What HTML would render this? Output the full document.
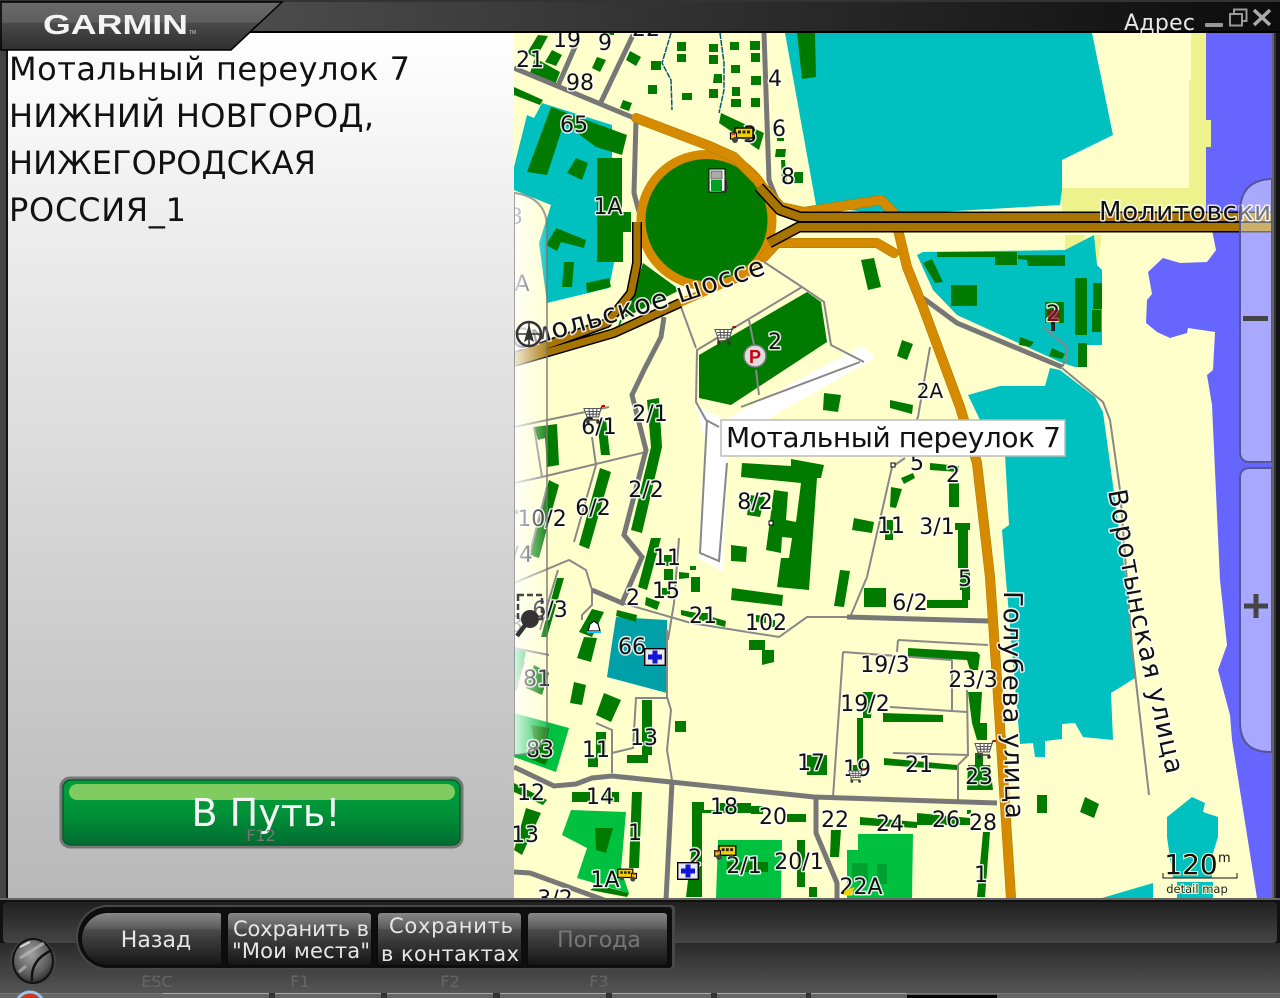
<!DOCTYPE html>
<html><head><meta charset="utf-8"><style>
html,body{margin:0;padding:0;background:#000;width:1280px;height:998px;overflow:hidden}
svg{display:block;font-family:"DejaVu Sans","Liberation Sans",sans-serif}
.l text,text.h{paint-order:stroke;stroke:#fff;stroke-width:3px;stroke-opacity:.85;stroke-linejoin:round;fill:#111;font-size:22px}
.l text{text-anchor:middle}
</style></head><body>
<svg width="1280" height="998" viewBox="0 0 1280 998" xmlns="http://www.w3.org/2000/svg">
<defs>
<linearGradient id="pg" x1="0" y1="0" x2="0" y2="1"><stop offset="0" stop-color="#fff"/><stop offset=".25" stop-color="#ebebeb"/><stop offset="1" stop-color="#b8b8b8"/></linearGradient>
<linearGradient id="tb" x1="0" y1="0" x2="1" y2="0"><stop offset="0" stop-color="#5c5c5c"/><stop offset=".5" stop-color="#333"/><stop offset="1" stop-color="#0c0c0c"/></linearGradient>
<linearGradient id="lg" x1="0" y1="0" x2="0" y2="1"><stop offset="0" stop-color="#6a6a6a"/><stop offset=".42" stop-color="#5e5e5e"/><stop offset=".44" stop-color="#4a4a4a"/><stop offset="1" stop-color="#2e2e2e"/></linearGradient>
<linearGradient id="gb" x1="0" y1="0" x2="0" y2="1"><stop offset="0" stop-color="#00a03c"/><stop offset=".5" stop-color="#009238"/><stop offset="1" stop-color="#006a30"/></linearGradient>
<linearGradient id="bt" x1="0" y1="0" x2="0" y2="1"><stop offset="0" stop-color="#202020"/><stop offset="1" stop-color="#454545"/></linearGradient>
<linearGradient id="bl" x1="0" y1="0" x2="0" y2="1"><stop offset="0" stop-color="#2a2a2a"/><stop offset="1" stop-color="#555"/></linearGradient>
<linearGradient id="btn" x1="0" y1="0" x2="0" y2="1"><stop offset="0" stop-color="#8a8a8a"/><stop offset=".3" stop-color="#5c5c5c"/><stop offset=".33" stop-color="#4a4a4a"/><stop offset="1" stop-color="#141414"/></linearGradient>
<linearGradient id="ov" x1="0" y1="0" x2="1" y2="0"><stop offset="0" stop-color="#fff" stop-opacity=".85"/><stop offset="1" stop-color="#fff" stop-opacity=".12"/></linearGradient>
<radialGradient id="kn" cx=".45" cy=".35" r=".7"><stop offset="0" stop-color="#a0a0a0"/><stop offset=".7" stop-color="#5a5a5a"/><stop offset="1" stop-color="#2a2a2a"/></radialGradient>
<clipPath id="mc"><rect x="514" y="33" width="758" height="865"/></clipPath>
<symbol id="bus" viewBox="0 0 24 16" overflow="visible"><rect x="5" y="1" width="18" height="10" fill="#f4d000" stroke="#000" stroke-width="1.4"/><rect x="0.5" y="6" width="6" height="6" fill="#f4d000" stroke="#000" stroke-width="1.2"/><path d="M8 3.5h3v3H8zM12.5 3.5h3v3h-3zM17 3.5h3v3h-3z" fill="#222"/><rect x="2" y="6" width="3" height="2" fill="#d33"/><circle cx="5" cy="13" r="3" fill="#444"/><circle cx="18" cy="12" r="2.2" fill="#444"/></symbol>
<symbol id="cart" viewBox="0 0 22 20" overflow="visible"><path d="M1 3.5H18L15.5 12H4ZM3 6.5H17M3.7 9.2H16M6 3.5L6.8 12M10 3.5V12M14 3.5L13 12" fill="#fff" stroke="#555" stroke-width="1.1"/><path d="M18 3.5L19 1H21M4 12V15H16" fill="none" stroke="#444" stroke-width="1.4"/><path d="M19 0h3v2h-3z" fill="#c00"/><circle cx="5" cy="17" r="1.8" fill="#333"/><circle cx="15" cy="17" r="1.8" fill="#333"/></symbol>
<symbol id="cross" viewBox="0 0 22 18" overflow="visible"><rect x=".7" y=".7" width="20.6" height="16.6" fill="#e8e8f0" stroke="#000" stroke-width="1.4"/><path d="M8.500 2.500h5v4h4.500v5h-4.500v4h-5v-4h-4.500v-5h4.500z" fill="#1414d8"/></symbol>
</defs>

<!-- MAP -->
<g clip-path="url(#mc)">
<rect x="514" y="33" width="758" height="865" fill="#ffffcc"/>
<!-- water -->
<path d="M1206 33H1272V898H1257L1232 740 1230 715 1218 670 1227 645 1220 580 1212 405 1207 375 1213 370 1215 332 1188 328 1187 333 1170 338 1157 332 1146 323 1147 300 1152 294 1148 272 1163 258 1180 263 1207 262 1216 250 1212 230 1206 210V147H1211V120H1206Z" fill="#6666ff"/>
<!-- lime -->
<path d="M1191 33H1206V120H1211V147H1206V215H1062V188H1106V188H1189V80H1191Z" fill="#eef28c"/>
<path d="M1065 235H1085L1083 243 1065 251ZM1095 235H1102L1097 267H1094Z" fill="#eef28c"/>
<!-- teal -->
<g fill="#00c0c0">
<path d="M785 33H1092L1113 135 1062 160V190L1060 205 884 215 816 205Z"/>
<path d="M514 167L527 115 534 118 542 103 612 125 612 155 614 263 609 288 547 303 539 243 551 205 514 190Z"/>
<path d="M917 255L923 252 1065 250 1094 235 1097 265 1102 270 1102 345 1087 345 1087 367 1075 367 1060 362 957 315 933 290Z"/>
<path d="M968 395L1000 386H1045L1050 368 1060 370 1095 397 1103 412 1126 580 1135 678 1111 693 1113 740 1083 737 1075 723 1062 724 1062 739 1045 741 1045 757 1035 757 1033 743 1020 744 1006 580 1002 530 1009 525 1005 455 980 420Z"/>
<path d="M1167 817L1192 797 1205 803 1203 812 1218 817 1218 837 1213 853 1212 878H1173L1167 837ZM1102 898L1153 883V898ZM1177 882H1213V898H1177Z"/>
</g>
<path d="M616 617L667 620V693L607 677 612 643Z" fill="#00a0a8"/>
<!-- white parking strip -->
<path d="M695 405L725 420 863 345 875 358 745 432 728 450 723 572 698 558 705 440Z" fill="#fff"/>
<!-- bright green parks -->
<g fill="#00c040">
<path d="M571 810L626 812 621 870 629 893 577 878 587 848 562 835Z"/>
<path d="M514 713L569 728 556 772 514 757Z"/>
<path d="M514 647L526 652 517 690 514 692Z"/>
<path d="M718 840H782L781 898H716Z"/>
<path d="M858 834H913L912 898H847V850H858Z"/>
</g>
<!-- buildings -->
<g fill="#007b00">
<path d="M643 263L680 290 620 320 616 333 632 300Z"/>
<path d="M699 355L807 292 821 302 827 342 731 405 699 398Z"/>
<path d="M797 33H815L816 77 802 79Z"/>
<path d="M551 107L627 135 622 155 596 147 564 123 547 175 527 172Z"/>
<path d="M576 158L588 163 582 180 567 173Z"/>
<path d="M597 158H622V212H631V232H623V262H597Z"/>
<path d="M556 228L586 240 584 248 561 242 557 251 546 245Z"/>
<path d="M564 262H574L572 287H562Z"/>
<path d="M586 283L609 278 611 287 587 293Z"/>
<path d="M861 260L874 258 881 287 868 290Z"/>
<path d="M538 35L548 36 536 58 527 53ZM535 58L560 72 555 85 530 73ZM552 50L562 55 556 66 545 62Z"/>
<path d="M630 51L641 57 636 66 626 60ZM597 57L606 60 600 72 592 68Z"/>
<path d="M514 87L543 100 540 105 514 95Z"/>
<path d="M721 113L764 133 759 150 719 123Z"/>
<path d="M776 149H786L785 157H775ZM781 160H785L787 183H782ZM794 172H803V183H794ZM777 138H784V141H777Z"/>
<path d="M677 42h9v9h-9zM677 54h9v8h-9zM651 61h10v9h-10zM648 85h9v9h-9zM623 100l9 3-3 8-9-3zM682 93h10v7h-10zM709 44h9v8h-9zM709 55h9v9h-9zM714 74l-1 9h9v-9zM709 89h9v9h-9zM730 42h9v8h-9zM750 41h10v9h-10zM751 53h9v9h-9zM731 65h9v8h-9zM751 76h10v9h-10zM732 87h8v9h-8zM731 99h10v8h-10zM751 98h9v9h-9z"/>
<path d="M824 393L841 395 838 412 823 410ZM890 400L913 405 912 414 890 408ZM902 340L913 344 907 360 897 356Z"/>
<path d="M742 463L791 466V459L824 465 821 478H817L809 590 777 587 781 558H789L792 538 782 537 781 553 766 550 774 490 788 492 786 520 796 522 801 483 741 477Z"/>
<path d="M750 495L765 497 760 517 747 515ZM731 545L747 547 746 562 731 561ZM732 588L783 595 782 606 731 600ZM840 570L850 571 844 607 834 606ZM864 588H886V607H864ZM854 518L874 522 872 533 852 530Z"/>
<path d="M937 252H1017V265H995V257H937ZM1018 255H1065V266H1028L1027 260 1018 259ZM923 263L932 259 943 282 935 283ZM951 285H977V306H951ZM1075 278H1087V335H1075ZM1093 283H1102V309H1093ZM1092 310H1101V332H1092ZM1078 343H1087V367H1078ZM1020 337L1034 342 1030 347 1019 345ZM1052 348L1065 354 1062 359 1049 356ZM1045 302H1064V323H1045Z"/>
<path d="M647 400L659 398 662 447 642 533 631 530 651 447Z"/>
<path d="M597 420H606L610 455H601ZM534 427L557 424 559 465 547 467 545 438 538 440ZM600 468L611 472 589 549 579 545ZM549 480L559 485 539 558 529 555ZM651 538H661L647 590 638 587Z"/>
<path d="M664 555h8v11h-8zM664 569h9v11h-9zM679 572l10 1v5l-10 1zM691 577h9v15h-9zM646 597l14 5-3 8-12-5zM662 588h8v7h-8zM681 610l16 3-1 6-15-4zM699 613h10l-1 8h-9zM712 617l14 4-1 6-14-4zM756 615l10 1v7l-10-1zM770 620h5v7h-5z"/>
<path d="M557 578H564L547 637 541 637ZM592 609L604 612 592 637 579 632ZM617 610L637 615 636 622 616 616Z"/>
<path d="M584 637L597 638 591 662 577 658ZM574 682L586 685 582 705 570 703ZM604 693L621 700 611 722 596 715Z"/>
<path d="M642 700H652V755H648V763L627 763 627 755 642 755ZM596 732H606V753H598V767H588V757H596ZM675 721H686V732H675ZM749 640H765V650H774V662L762 665V650H749Z"/>
<path d="M534 665L549 673 542 695 526 688ZM531 725L549 728 547 738 553 740 553 750 545 765 528 758 530 745 535 745Z"/>
<path d="M572 792H590V802H572ZM605 792H619V802H605ZM632 792H642L639 868H629ZM595 828L613 828 606 853 596 850ZM526 808L541 813 522 855 514 850ZM514 783L547 800 543 805 514 792Z"/>
<path d="M692 802H704V810H718V803H751V813H702V897H686L692 847ZM751 806h12v8h-12zM787 814h19v8h-19zM797 840L805 840 805 887 797 887ZM809 887H817V897H809ZM831 830H841L839 857 830 857Z"/>
<path d="M727 862H768V872H727ZM598 885L629 893 627 897 590 890Z"/>
<path d="M852 863H868V882H852ZM877 864H887V884H877Z" fill="#00a030"/>
<path d="M908 648L977 652 980 655 978 670H970L967 660 908 657ZM968 692H982L980 723H987V740H977L972 723ZM883 713L943 715V722H883ZM857 718H863V770H857ZM863 692L873 692 871 718 863 718ZM884 758L957 765V770L884 765ZM967 790L968 765 990 765 993 790ZM975 753H983V765H975Z"/>
<path d="M1037 795H1047V813H1037ZM1085 797L1099 804 1094 818 1080 812ZM860 817L917 822V828L860 825ZM917 813L970 818V825L917 825ZM983 832H990L985 897H977Z"/>
<path d="M927 600H968V608H927ZM962 587H970V600H962ZM955 523H970V530H968V568H958V530H955ZM960 570H970V590H960ZM930 463L959 466 959 472 930 470ZM949 483H959V507H949ZM901 478L913 473 915 478 904 484ZM891 487L902 489 896 508 890 507ZM885 520H893V540H885Z"/>
<path d="M690 566h6v4h-6zM514 510h4v4h-4zM807 755h20v20h-20zM850 765h8v10h-8zM967 810h4v4h-4z"/>
</g>
<path d="M604 33L614 33" stroke="#007b00" stroke-width="4"/>
<!-- thin blue streams -->
<path d="M671 33L662 63 671 80 672 110M720 33L724 63 724 90 719 113" fill="none" stroke="#005a7a" stroke-width="1.500" stroke-dasharray="6 1"/>
<!-- thin grey roads -->
<g fill="none" stroke="#888" stroke-width="2">
<path d="M764 262L802 287 824 302 831 345 864 362M802 287L697 350 696 402 706 420 719 427M681 307L696 348M749 320L754 345M756 370L759 395M741 407L860 362"/>
<path d="M707 420L700 553 719 561 727 463"/>
<path d="M851 615L867 577 892 467 905 458M900 457L918 417 930 347"/>
<path d="M514 427L609 407M514 483L542 477 646 452M542 477L534 427M596 465L592 437M596 465L574 542M547 487L528 560"/>
<path d="M679 538L674 603 668 640"/>
<path d="M622 603L691 623 779 637 807 617H847"/>
<path d="M592 590L586 570 569 560 514 583M558 570L540 630M592 590L592 605 582 615 582 620"/>
<path d="M667 630V697L671 710 667 750 672 780"/>
<path d="M612 773V730L596 723M612 753L633 748 636 698H667"/>
<path d="M843 652L833 797M843 652L952 660M898 640L988 645M898 640L897 652M952 660V710M890 707L967 712M967 690L968 755 893 753M968 755L958 765V802"/>
<path d="M1062 368L1103 402 1110 420 1120 490 1132 647 1149 795"/>
<path d="M1043 327L1067 347V358L1062 367"/>
<path d="M514 648L549 655M524 662L514 693"/>
</g>
<!-- thick grey roads -->
<g fill="none" stroke="#777" stroke-width="5">
<path d="M514 68L634 118M557 88L578 40M601 102L633 35"/>
<path d="M636 120L634 193 639 212M764 33L769 180 777 200"/>
<path d="M664 317L661 337 644 370 632 395 646 450 624 535 642 557 622 603 592 590"/>
<path d="M847 617L988 621"/>
<path d="M923 298L957 323 1062 367"/>
<path d="M514 767L554 786 576 784 592 778 612 776 671 782 814 797 997 803"/>
<path d="M672 782L666 900M816 797V833L837 883V900M514 872L530 873 604 900"/>
</g>
<!-- orange roads -->
<circle cx="706.500" cy="220" r="65.500" fill="#007b00"/>
<circle cx="706.500" cy="220" r="65.500" fill="none" stroke="#d68a00" stroke-width="9"/>
<g fill="none" stroke-linejoin="round" stroke-linecap="round">
<path d="M636 118L707 145 734 157 757 180M759 183L781 207 804 212 881 200 894 213 907 267 923 307 960 407 977 463 990 577 997 680 1011 898M764 257L777 243 877 243 894 253" stroke="#a87800" stroke-width="10"/>
<path d="M636 118L707 145 734 157 757 180M759 183L781 207 804 212 881 200 894 213 907 267 923 307 960 407 977 463 990 577 997 680 1011 898M764 257L777 243 877 243 894 253" stroke="#d68a00" stroke-width="9"/>
</g>
<path d="M754 270L680 303" stroke="#d68a00" stroke-width="8"/>
<!-- dark main road -->
<g fill="none" stroke-linejoin="round">
<path d="M759 187L780 210 800 217H1272M769 243L799 227H1272" stroke="#000" stroke-width="11"/>
<path d="M759 187L780 210 800 217H1272M769 243L799 227H1272" stroke="#a87400" stroke-width="8"/>
<path d="M637 222V263L631 293 607 323 514 357M680 303L614 333 514 362" stroke="#000" stroke-width="10"/>
<path d="M637 222V263L631 293 607 323 514 357M680 303L614 333 514 362" stroke="#a87400" stroke-width="7"/>
</g>
<!-- map labels -->
<g class="l">
<text x="567" y="47">19</text><text x="605" y="50">9</text><text x="646" y="36">22</text><text x="530" y="67">21</text><text x="580" y="90">98</text><text x="775" y="86">4</text><text x="574" y="132">65</text><text x="750" y="142">3</text><text x="779" y="136">6</text><text x="788" y="184">8</text><text x="608" y="214">1A</text><text x="775" y="349">2</text><text x="650" y="421">2/1</text><text x="599" y="434">6/1</text><text x="930" y="398" style="font-size:20px">2A</text><text x="1053" y="321">2</text><text x="917" y="470">5</text><text x="953" y="482">2</text><text x="755" y="509">8/2</text><text x="646" y="497">2/2</text><text x="593" y="515">6/2</text><text x="542" y="526">10/2</text><text x="891" y="533">11</text><text x="937" y="534">3/1</text><text x="667" y="565">11</text><text x="666" y="598">15</text><text x="965" y="586">5</text><text x="910" y="610">6/2</text><text x="633" y="605">2</text><text x="550" y="617">6/3</text><text x="703" y="623">21</text><text x="766" y="630">102</text><text x="632" y="654">66</text><text x="885" y="672">19/3</text><text x="973" y="687">23/3</text><text x="537" y="686">81</text><text x="865" y="711">19/2</text><text x="644" y="745">13</text><text x="540" y="757">83</text><text x="596" y="757">11</text><text x="811" y="770">17</text><text x="857" y="776">19</text><text x="919" y="772">21</text><text x="979" y="784">23</text><text x="531" y="800">12</text><text x="600" y="804">14</text><text x="724" y="814">18</text><text x="773" y="824">20</text><text x="835" y="827">22</text><text x="890" y="831">24</text><text x="946" y="827">26</text><text x="983" y="830">28</text><text x="525" y="842">13</text><text x="635" y="840">1</text><text x="695" y="865">2</text><text x="744" y="873">2/1</text><text x="799" y="869">20/1</text><text x="605" y="887">1A</text><text x="861" y="894">22A</text><text x="981" y="882">1</text><text x="555" y="906">3/2</text>
<text x="522" y="291">A</text><text x="516" y="224">3</text><text x="522" y="562">/4</text><text x="516" y="632">3</text>
</g>
<!-- street names -->
<path id="p1" d="M514 350L551 340 667 307 680 303 766 274" fill="none"/>
<path id="p2" d="M1004 591L1003 700 1006 820" fill="none"/>
<path id="p3" d="M1108 491L1130 612 1150 700 1167 776" fill="none"/>
<text class="h" style="font-size:27px"><textPath href="#p1" textLength="264" lengthAdjust="spacing">Смольское шоссе</textPath></text>
<text class="h" style="font-size:26px"><textPath href="#p2" textLength="228" lengthAdjust="spacing">Голубева улица</textPath></text>
<text class="h" style="font-size:26px"><textPath href="#p3" textLength="290" lengthAdjust="spacing">Воротынская улица</textPath></text>
<text class="h" x="1099" y="220" style="font-size:26px" textLength="172">Молитовски</text>
<!-- left translucent panel -->
<path d="M514 193H515Q547 198 547 228V725Q547 755 514 755Z" fill="url(#ov)" stroke="#777" stroke-opacity=".7" stroke-width="2"/>
<!-- right zoom panels -->
<path d="M1272 179H1270Q1240 181 1240 212V452Q1240 462 1250 462H1272Z" fill="#fff" fill-opacity=".43" stroke="#55559a" stroke-width="2"/>
<path d="M1272 468H1250Q1240 468 1240 478V722Q1240 752 1270 752H1272Z" fill="#fff" fill-opacity=".43" stroke="#55559a" stroke-width="2"/>
<rect x="1243" y="316" width="25" height="5" fill="#444"/>
<path d="M1244 606H1268M1256 594V618" stroke="#444" stroke-width="5"/>
<!-- icons -->
<g>
<rect x="709" y="169" width="16" height="23" fill="#fff" stroke="#000"/><rect x="711" y="171" width="11" height="8" fill="#aaa" stroke="#444" stroke-width=".7"/><rect x="711" y="180" width="11" height="11" fill="#00a020"/>
<path d="M725 175L727 187 726 191 721 192" fill="none" stroke="#333" stroke-width="1.500"/>
<use href="#bus" x="730" y="127" width="24" height="16"/>
<use href="#bus" x="714" y="845" width="23" height="15"/>
<g transform="translate(637 868) scale(-1 1)"><use href="#bus" width="20" height="14"/></g>
<use href="#cart" x="714" y="326" width="22" height="20"/>
<use href="#cart" x="583" y="405" width="22" height="20"/>
<use href="#cart" x="974" y="740" width="22" height="20"/>
<use href="#cart" x="848" y="768" width="17" height="16"/>
<use href="#cross" x="644" y="648" width="22" height="18"/>
<use href="#cross" x="677" y="862" width="22" height="18"/>
<circle cx="755" cy="356" r="11" fill="#ddd" stroke="#777" stroke-width="1.500"/>
<text x="755" y="363" text-anchor="middle" style="font-family:'Liberation Sans',sans-serif;font-weight:bold;font-size:18px" fill="#c80010">P</text>
<path d="M1048 310h12v11h-12z" fill="#8a1020" opacity=".7"/>
<rect x="1051" y="322" width="4" height="9" fill="#222"/>
<path d="M590 624l4-3 4 3 2 7h-12z" fill="#fff" stroke="#000" stroke-width="1.200"/>
<rect x="587" y="631" width="14" height="2" fill="#00c8ff"/>
<rect x="769" y="521" width="4" height="4" fill="#fff" stroke="#000"/>
<rect x="891" y="463" width="4" height="4" fill="#fff" stroke="#000"/>
<path d="M845 890l10-3-4 8h-8z" fill="#f4d000"/>
</g>
<!-- compass -->
<circle cx="529" cy="334" r="12" fill="#fff" fill-opacity=".45" stroke="#333" stroke-width="2.500"/>
<path d="M529 324L534 342 529 339 524 342Z" fill="#333"/><path d="M517 334H541M529 322V346" stroke="#333" stroke-width="1.500"/>
<!-- magnifier -->
<rect x="518" y="595" width="24" height="24" fill="none" stroke="#444" stroke-width="2.500" stroke-dasharray="6 3"/>
<circle cx="530" cy="619" r="9" fill="#333"/><path d="M526 624L517 636" stroke="#333" stroke-width="4.500"/>
<!-- callout -->
<rect x="721" y="420" width="344" height="36" fill="#fff" stroke="#bbb" stroke-width="1.500"/>
<text x="726" y="447" style="font-size:28px" fill="#111" textLength="335">Мотальный переулок 7</text>
<!-- scale -->
<text x="1191" y="874" text-anchor="middle" style="font-size:28px;paint-order:stroke;stroke:#ffffcc;stroke-width:2px" fill="#111">120</text>
<text x="1218" y="862" style="font-size:13px" fill="#111">m</text>
<path d="M1163 873V878H1237V873" fill="none" stroke="#111" stroke-width="1"/>
<text x="1197" y="893" text-anchor="middle" style="font-size:11.500px;paint-order:stroke;stroke:#ffffcc;stroke-width:2px" fill="#222">detail map</text>
</g>

<!-- left info panel -->
<rect x="8" y="33" width="506" height="865" fill="url(#pg)"/>
<g fill="#111" style="font-size:32px">
<text x="9" y="80" textLength="401">Мотальный переулок 7</text>
<text x="9" y="127" textLength="365">НИЖНИЙ НОВГОРОД,</text>
<text x="9" y="174" textLength="307">НИЖЕГОРОДСКАЯ</text>
<text x="9" y="221" textLength="177">РОССИЯ_1</text>
</g>
<!-- go button -->
<rect x="61" y="778" width="401" height="69" rx="9" fill="url(#gb)" stroke="#777" stroke-width="3"/>
<rect x="63" y="780" width="397" height="65" rx="8" fill="none" stroke="#00622a" stroke-width="1.500"/>
<rect x="69" y="784" width="386" height="16" rx="8" fill="#80cc60"/>
<text x="266" y="826" text-anchor="middle" style="font-size:38px" fill="#f4f4f4">В Путь!</text>
<text x="261" y="841" text-anchor="middle" style="font-size:16px" fill="#777">F12</text>

<!-- frame -->
<rect x="0" y="0" width="1280" height="33" fill="url(#tb)"/>
<rect x="0" y="0" width="1280" height="2" fill="#333"/>
<rect x="230" y="31" width="1050" height="2" fill="#000"/>
<rect x="0" y="33" width="8" height="865" fill="#444"/><rect x="6" y="33" width="2" height="865" fill="#111"/>
<rect x="1272" y="33" width="8" height="865" fill="#333"/><rect x="1272" y="33" width="2" height="865" fill="#666"/><rect x="1276" y="33" width="4" height="865" fill="#111"/>
<path d="M1 2H282L231 50H1Z" fill="url(#lg)" stroke="#000" stroke-width="1.500"/>
<text x="43" y="34" style="font-family:'Liberation Sans',sans-serif;font-weight:bold;font-size:28px" fill="#f4f4f4" textLength="145" lengthAdjust="spacingAndGlyphs">GARMIN</text>
<text x="189" y="34" style="font-family:'Liberation Sans',sans-serif;font-size:5px" fill="#ccc">TM</text>
<text x="1124" y="30" style="font-size:22px" fill="#e8e8e8" textLength="71">Адрес</text>
<rect x="1205" y="23" width="18" height="4" rx="1" fill="#999"/>
<path d="M1234 13V9.500H1246.500V21H1242M1230 14H1242V25.500H1230Z" fill="none" stroke="#999" stroke-width="2"/>
<path d="M1254 10L1270 25M1270 10L1254 25" stroke="#aaa" stroke-width="3.500"/>

<!-- bottom bar -->
<rect x="0" y="898" width="1280" height="100" fill="#111"/>
<rect x="0" y="898" width="1280" height="2" fill="#666"/>
<rect x="0" y="943" width="1280" height="50" fill="url(#bl)"/>
<rect x="3" y="902" width="1274" height="41" rx="4" fill="url(#bt)"/>
<rect x="0" y="993" width="1280" height="5" fill="#666"/>
<rect x="0" y="993" width="1280" height="1" fill="#777"/>
<path d="M163 993h106v1h-106zM275 993h106v1h-106zM387 993h106v1h-106zM500 993h106v1h-106zM612 993h99v1h-99zM717 993h89v1h-89zM811 993h95v1h-95z" fill="#aaa"/>
<path d="M269 993h6v5h-6zM381 993h6v5h-6zM493 993h7v5h-7zM606 993h6v5h-6zM711 993h6v5h-6zM806 993h5v5h-5z" fill="#333"/>
<rect x="907" y="995" width="90" height="3" fill="#050505"/>
<rect x="76" y="905" width="599" height="65" rx="32" fill="#484848"/>
<rect x="374" y="905" width="301" height="65" rx="4" fill="#484848"/>
<rect x="78" y="907" width="594" height="61" rx="30" fill="#0e0e0e"/>
<rect x="374" y="907" width="298" height="61" rx="3" fill="#0e0e0e"/>
<path d="M108 912H219Q222 912 222 915V963Q222 966 219 966H108A27 27 0 0 1 108 912Z" fill="url(#btn)" stroke="#0c0c0c" stroke-width="2"/>
<rect x="227" y="912" width="145" height="54" rx="4" fill="url(#btn)" stroke="#0c0c0c" stroke-width="2"/>
<rect x="377" y="912" width="145" height="54" rx="4" fill="url(#btn)" stroke="#0c0c0c" stroke-width="2"/>
<rect x="527" y="912" width="141" height="54" rx="4" fill="url(#btn)" stroke="#0c0c0c" stroke-width="2"/>
<g fill="#e6e6e6" text-anchor="middle" style="font-size:21px">
<text x="156" y="947" style="font-size:22px">Назад</text>
<text x="233" y="936" text-anchor="start" textLength="136">Сохранить в</text>
<text x="232" y="958" text-anchor="start" textLength="138">"Мои места"</text>
<text x="389" y="933" text-anchor="start" textLength="124">Сохранить</text>
<text x="381" y="961" text-anchor="start" textLength="138">в контактах</text>
<text x="599" y="947" fill="#777" style="font-size:22px">Погода</text>
</g>
<g fill="#666" text-anchor="middle" style="font-size:16px">
<text x="157" y="987">ESC</text><text x="300" y="987">F1</text><text x="450" y="987">F2</text><text x="599" y="987">F3</text>
</g>
<circle cx="33" cy="961" r="23" fill="#444"/>
<ellipse cx="33" cy="961" rx="21" ry="23" fill="#111"/>
<ellipse cx="33" cy="961" rx="19" ry="21" fill="url(#kn)"/>
<path d="M32 981Q30 960 52 950" fill="none" stroke="#111" stroke-width="2.500"/>
<path d="M20 958L44 943M19 972L26 966" stroke="#bbb" stroke-width="3" opacity=".7"/>
<path d="M20 947L30 942" stroke="#ddd" stroke-width="2"/>
<circle cx="30" cy="1006" r="14" fill="#c63a20" stroke="#9cc4e8" stroke-width="3"/>
</svg>
</body></html>
